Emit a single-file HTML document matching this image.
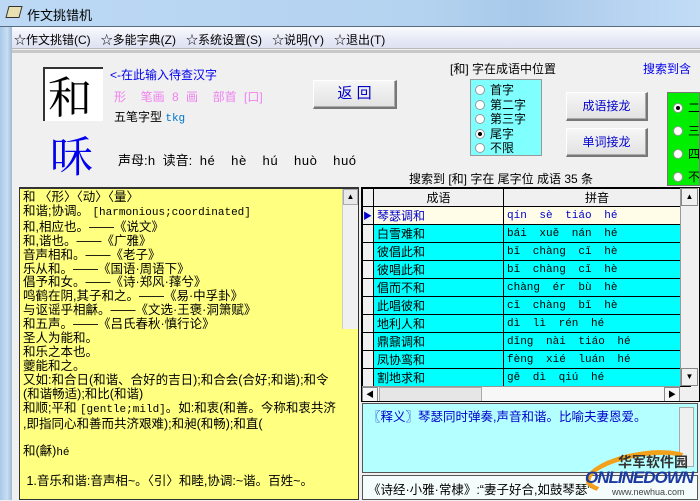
<!DOCTYPE html>
<html><head><meta charset="utf-8"><style>
*{margin:0;padding:0;box-sizing:border-box}
body{width:700px;height:500px;overflow:hidden;background:#f0f0f0;font-family:"Liberation Sans","Noto Sans CJK SC",sans-serif;font-size:12px;position:relative}
.a{position:absolute;white-space:nowrap}
.btn{position:absolute;background:linear-gradient(#f6f6f6,#e2e2e2);border:1px solid #fff;border-right:2px solid #777;border-bottom:2px solid #777;box-shadow:inset -1px -1px #aaa;text-align:center;color:#0000cc}
.rad{display:inline-block;width:10px;height:10px;border-radius:50%;background:#fff;border:1px solid #999;vertical-align:-1px;margin-right:5px;position:relative}
.rad.on:after{content:"";position:absolute;left:2px;top:2px;width:4px;height:4px;border-radius:50%;background:#000}
.mono{font-family:"Liberation Mono","Noto Sans CJK SC",monospace}
table{border-collapse:collapse}
td{border:1px solid #000;height:18px;padding:0 3px;font-size:12px;white-space:nowrap}
.py{font-family:"Liberation Mono",monospace;font-size:11px;color:#000;word-spacing:6px}
</style></head><body>
<!-- title bar -->
<div class="a" style="left:0;top:0;width:700px;height:27px;background:linear-gradient(90deg,#bcd8f4,#b4d3f0 60%,#a9c9ea 75%,#c2dcf6);border-bottom:1px solid #5a6b80"></div>
<div class="a" style="left:7px;top:6px;width:14px;height:12px;background:#e8e0b0;border:1px solid #333;transform:skewX(-15deg)"></div>
<div class="a" style="left:27px;top:5px;font-size:13px;color:#000">作文挑错机</div>
<!-- left frame -->
<div class="a" style="left:0;top:27px;width:12px;height:473px;background:linear-gradient(90deg,#a8c8e8,#c8def4 60%,#9fb8d2)"></div>
<!-- menu -->
<div class="a" style="left:12px;top:27px;width:688px;height:22px;background:linear-gradient(#fafbfd,#e6e9f6 60%,#dfe2f1);border-bottom:1px solid #b8b8b8"></div>
<div class="a" style="left:14px;top:31px;font-size:12px;color:#000;word-spacing:0">☆作文挑错(C)&nbsp;&nbsp;&nbsp;☆多能字典(Z)&nbsp;&nbsp;&nbsp;☆系统设置(S)&nbsp;&nbsp;&nbsp;☆说明(Y)&nbsp;&nbsp;&nbsp;☆退出(T)</div>
<div class="a" style="left:12px;top:50px;width:688px;height:3px;background:#c8c8c8"></div>
<!-- char box -->
<div class="a" style="left:43px;top:67px;width:60px;height:54px;background:#fff;border-left:2px solid #333;border-top:2px solid #333"></div>
<div class="a" style="left:48px;top:68px;font-size:44px;line-height:52px;font-family:'Noto Serif CJK SC',serif;color:#000">和</div>
<div class="a" style="left:110px;top:66px;color:#0000ee;font-size:12px">&lt;-在此输入待查汉字</div>
<div class="a" style="left:114px;top:88px;color:#ee82ee;font-size:12px;word-spacing:4px">形&nbsp;&nbsp;笔画 8 画&nbsp;&nbsp;部首 [口]</div>
<div class="a" style="left:114px;top:108px;color:#000;font-size:12px">五笔字型 <span style="color:#0077cc;font-family:'Liberation Mono';font-size:11px">tkg</span></div>
<div class="a" style="left:50px;top:131px;font-size:43px;line-height:48px;color:#0000ee;font-family:'Noto Serif CJK SC',serif">咊</div>
<div class="a" style="left:118px;top:150px;font-size:13px;color:#000">声母:<span class="mono">h</span>&nbsp;&nbsp;读音:&nbsp;&nbsp;<span class="mono" style="word-spacing:8px">hé hè hú huò huó</span></div>
<div class="btn" style="left:313px;top:80px;width:84px;height:29px;line-height:26px;font-size:15px">返 回</div>
<div class="a" style="left:450px;top:60px;font-size:12px">[和] 字在成语中位置</div>
<div class="a" style="left:643px;top:60px;font-size:12px;color:#0000ee">搜索到含</div>
<div class="a" style="left:470px;top:79px;width:72px;height:77px;background:#80ffff;border:1px solid #999;padding:3px 0 0 4px;line-height:14.5px;font-size:12px">
<div><span class="rad"></span>首字</div><div><span class="rad"></span>第二字</div><div><span class="rad"></span>第三字</div><div><span class="rad on"></span>尾字</div><div><span class="rad"></span>不限</div></div>
<div class="btn" style="left:566px;top:92px;width:82px;height:29px;line-height:26px">成语接龙</div>
<div class="btn" style="left:566px;top:128px;width:82px;height:29px;line-height:26px">单词接龙</div>
<div class="a" style="left:667px;top:92px;width:33px;height:94px;background:#00ee00;border:1px solid #777;padding:4px 0 0 5px;line-height:23px">
<div><span class="rad on"></span>二</div><div><span class="rad"></span>三</div><div><span class="rad"></span>四</div><div><span class="rad"></span>不</div></div>
<div class="a" style="left:409px;top:170px;font-size:12px">搜索到 [和] 字在 尾字位 成语 35 条</div>
<!-- left text -->
<div class="a" style="left:19px;top:187px;width:340px;height:313px;background:#ffff80;border:1px solid #333;border-top:2px solid #333;overflow:hidden">
<div style="padding:2px 0 0 3px;font-size:12.5px;line-height:13.9px;color:#000;white-space:pre">和 〈形〉〈动〉〈量〉
和谐;协调。 <span class="mono" style="font-size:11px">[harmonious;coordinated]</span>
和,相应也。——《说文》
和,谐也。——《广雅》
音声相和。——《老子》
乐从和。——《国语·周语下》
倡予和女。——《诗·郑风·萚兮》
鸣鹤在阴,其子和之。——《易·中孚卦》
与讴谣乎相龢。——《文选·王褒·洞箫赋》
和五声。——《吕氏春秋·慎行论》
圣人为能和。
和乐之本也。
夔能和之。
又如:和合日(和谐、合好的吉日);和合会(合好;和谐);和令
(和谐畅适);和比(和谐)
和顺;平和 <span class="mono" style="font-size:11px">[gentle;mild]</span>。如:和衷(和善。今称和衷共济
,即指同心和善而共济艰难);和昶(和畅);和直(

和(龢)<span class="mono" style="font-size:11px">hé</span>

 1.音乐和谐:音声相~。〈引〉和睦,协调:~谐。百姓~。</div>
<div style="position:absolute;right:0;top:0;width:16px;height:140px;background:#f0f0f0;border-left:1px solid #ccc"><div style="height:16px;border:1px solid #aaa;background:#e8e8e8;text-align:center;font-size:8px;line-height:14px">▲</div></div>
</div>
<!-- grid -->
<div class="a" style="left:361px;top:187px;width:339px;height:215px;background:#f0f0f0;border:1px solid #000;overflow:hidden">
<table style="position:absolute;left:0;top:0">
<tr style="background:#f0f0f0"><td style="width:11px;padding:0"></td><td style="width:130px;text-align:center">成语</td><td style="width:187px;text-align:center">拼音</td></tr>
<tr style="background:#fffde8;color:#0000cc"><td style="padding:0;font-size:9px;background:#f0f0f0">▶</td><td>琴瑟调和</td><td class="py" style="color:#0000cc">qín sè tiáo hé</td></tr>
<tr style="background:#00ffff"><td style="padding:0;background:#f0f0f0"></td><td>白雪难和</td><td class="py">bái xuě nán hé</td></tr>
<tr style="background:#00ffff"><td style="padding:0;background:#f0f0f0"></td><td>彼倡此和</td><td class="py">bǐ chàng cǐ hè</td></tr>
<tr style="background:#00ffff"><td style="padding:0;background:#f0f0f0"></td><td>彼唱此和</td><td class="py">bǐ chàng cǐ hè</td></tr>
<tr style="background:#00ffff"><td style="padding:0;background:#f0f0f0"></td><td>倡而不和</td><td class="py">chàng ér bù hè</td></tr>
<tr style="background:#00ffff"><td style="padding:0;background:#f0f0f0"></td><td>此唱彼和</td><td class="py">cǐ chàng bǐ hè</td></tr>
<tr style="background:#00ffff"><td style="padding:0;background:#f0f0f0"></td><td>地利人和</td><td class="py">dì lì rén hé</td></tr>
<tr style="background:#00ffff"><td style="padding:0;background:#f0f0f0"></td><td>鼎鼐调和</td><td class="py">dǐng nài tiáo hé</td></tr>
<tr style="background:#00ffff"><td style="padding:0;background:#f0f0f0"></td><td>凤协鸾和</td><td class="py">fèng xié luán hé</td></tr>
<tr style="background:#00ffff"><td style="padding:0;background:#f0f0f0"></td><td>割地求和</td><td class="py">gē dì qiú hé</td></tr>
</table>
<div style="position:absolute;left:318px;top:0;width:18px;height:198px;background:#f0f0f0;border-left:1px solid #999"><div style="height:18px;border:1px solid #888;text-align:center;font-size:8px;line-height:16px">▲</div><div style="position:absolute;bottom:0;width:17px;height:18px;border:1px solid #888;text-align:center;font-size:8px;line-height:16px">▼</div></div>
<div style="position:absolute;left:0;top:198px;width:318px;height:16px;background:#f7f7f7;border-top:1px solid #999"><div style="position:absolute;left:0;top:0;width:16px;height:15px;border:1px solid #888;font-size:8px;line-height:13px;text-align:center">◀</div><div style="position:absolute;left:17px;top:0;width:103px;height:15px;background:#e6e6e6;border:1px solid #aaa"></div><div style="position:absolute;right:0;top:0;width:16px;height:15px;border:1px solid #888;font-size:8px;line-height:13px;text-align:center">▶</div></div>
</div>
<div class="a" style="left:362px;top:403px;width:336px;height:70px;background:#b4ffff;border:1px solid #555;padding:2px 5px;color:#0000cc;font-size:12.5px">〖释义〗琴瑟同时弹奏,声音和谐。比喻夫妻恩爱。
<div style="position:absolute;right:3px;top:3px;width:15px;height:60px;border:1px solid #aaa;background:#f0f0f0"></div></div>
<div class="a" style="left:362px;top:475px;width:336px;height:25px;background:#f4fcfc;border:1px solid #555;padding:3px 5px;font-size:12.5px">《诗经·小雅·常棣》:“妻子好合,如鼓琴瑟”</div>
<!-- watermark -->
<div class="a" style="left:585px;top:452px;width:110px;height:40px;border:5px solid #f3a01a;border-radius:50%;border-bottom-color:transparent;border-right-color:transparent;transform:rotate(-10deg)"></div>
<div class="a" style="left:618px;top:452px;font-size:14px;font-weight:bold;color:#333">华军软件园</div>
<div class="a" style="left:585px;top:468px;font-size:17px;font-weight:bold;font-style:italic;color:#1a3aa0;letter-spacing:-1px">ONLINEDOWN</div>
<div class="a" style="left:612px;top:487px;font-size:9px;color:#444">www.newhua.com</div>
</body></html>
